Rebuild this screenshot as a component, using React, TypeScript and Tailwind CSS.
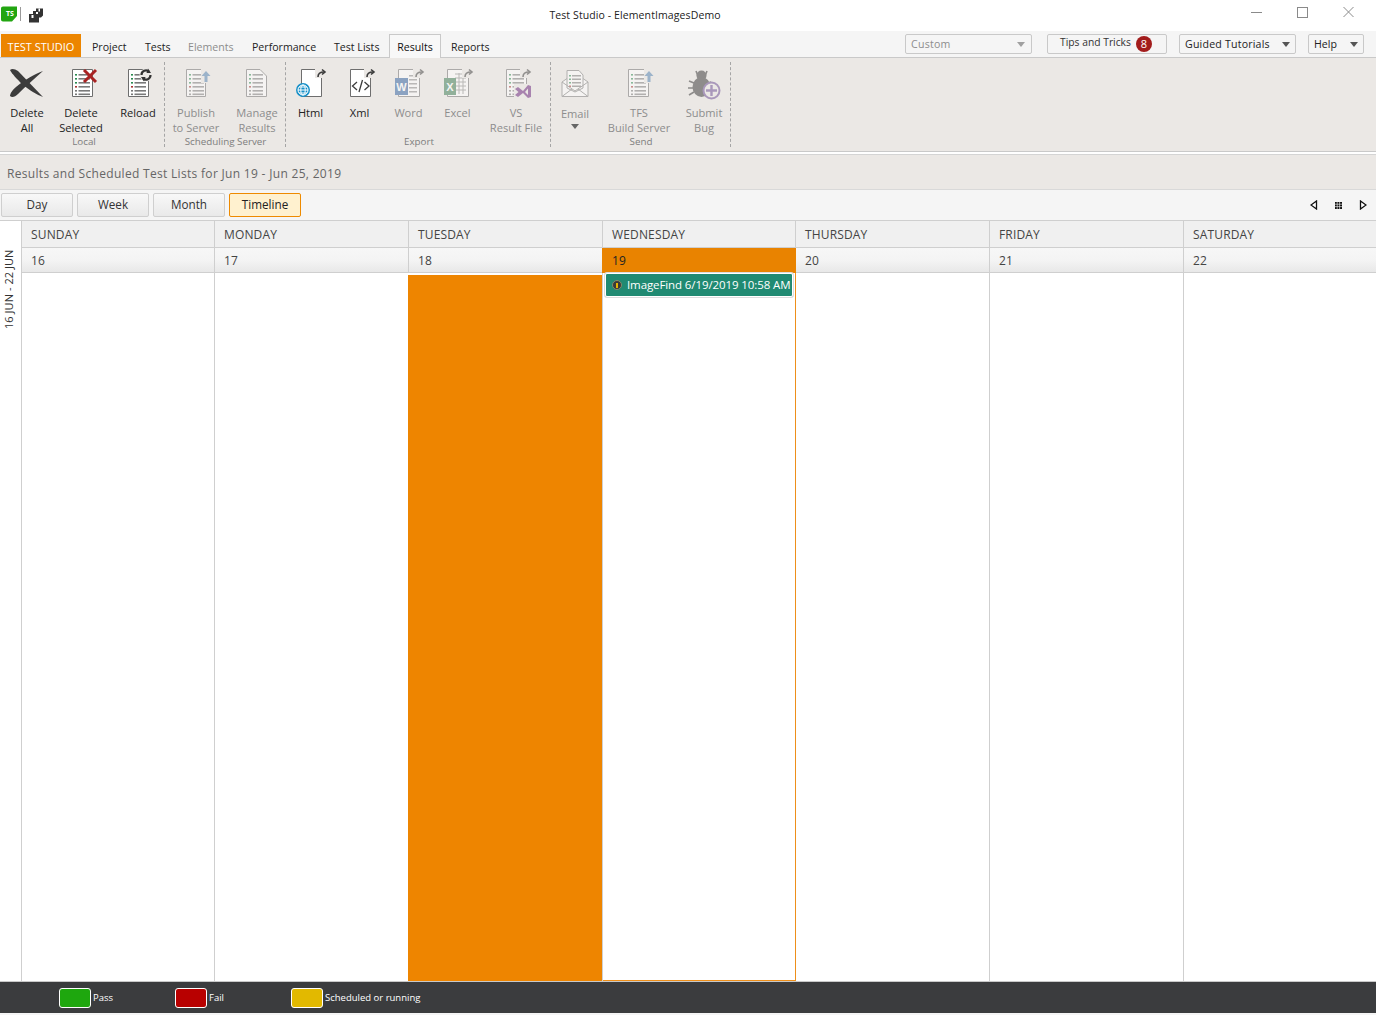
import React from "react";

const Svg = ({ children, dim }: { children: React.ReactNode; dim?: boolean }) => (
  <svg width="40" height="36" viewBox="0 0 40 36" className={dim ? "opacity-50" : ""}>
    {children}
  </svg>
);

const Doc = ({ x = 10, w = 21, fold = false, fill = "#ffffff", stroke = "#6e6e6e" }: { x?: number; w?: number; fold?: boolean; fill?: string; stroke?: string }) => (
  <path
    d={fold
      ? `M${x + 0.5} 4.5H${x + w - 7}L${x + w - 0.5} 11V31.5H${x + 0.5}Z`
      : `M${x + 0.5} 4.5H${x + w - 0.5}V31.5H${x + 0.5}Z`}
    fill={fill}
    stroke={stroke}
    strokeWidth="1"
  />
);

const Rows = ({ x = 13, w = 15, colors = true }: { x?: number; w?: number; colors?: boolean }) => (
  <g>
    {[9, 13, 17, 21, 25, 28.5].map((y, i) => (
      <g key={y}>
        <rect x={x} y={y} width="2" height="1.6" fill={!colors ? "#777" : i === 3 ? "#a33" : i < 3 ? "#2a8a50" : "#777"} />
        <rect x={x + 3.5} y={y} width={w - 3.5} height="1.6" fill="#7a7a7a" />
      </g>
    ))}
  </g>
);

const Curl = ({ x = 27 }: { x?: number }) => (
  <g fill="none" stroke="#3c3c3c" strokeWidth="1.6">
    <path d={`M${x} 12C${x} 8 ${x + 2} 7 ${x + 6} 7`} />
    <path d={`M${x + 4} 4.5L${x + 7} 7L${x + 4} 9.5`} />
  </g>
);

const UpArrow = ({ x = 30 }: { x?: number }) => (
  <path d={`M${x} 6L${x + 4.5} 11H${x + 1.5}V17H${x - 1.5}V11H${x - 4.5}Z`} fill="#4f7fb0" />
);

const icons: Record<string, React.ReactNode> = {
  deleteAll: (
    <Svg>
      <path d="M3 5C5 3 8 4 11 6L36 32C30 30 22 25 15 19C10 14 5 9 3 5Z" fill="#3c3c3c" />
      <path d="M36 6C28 9 17 15 9 22C5 25 3 29 3 31C5 33 8 32 11 29C19 21 28 13 36 6Z" fill="#3c3c3c" />
    </Svg>
  ),
  deleteSel: (
    <Svg>
      <Doc x={11} />
      <Rows x={14} />
      <path d="M23 5L35 17M35 5L23 17" stroke="#a82323" strokeWidth="3" />
    </Svg>
  ),
  reload: (
    <Svg>
      <Doc x={10} />
      <Rows x={13} />
      <circle cx="28" cy="10" r="6.5" fill="#ebe8e5" />
      <path d="M23.5 10A4.5 4.5 0 0 1 31 6.6M32.5 10A4.5 4.5 0 0 1 25 13.4" fill="none" stroke="#333" strokeWidth="2.2" />
      <path d="M30 3.5L33 8H28.5ZM26 16.5L23 12H27.5Z" fill="#333" />
    </Svg>
  ),
  publish: (
    <Svg dim>
      <Doc x={10} w={20} />
      <Rows x={13} />
      <rect x="25" y="3" width="10" height="15" fill="#ebe8e5" />
      <UpArrow x={30} />
    </Svg>
  ),
  manage: (
    <Svg dim>
      <Doc x={9} fold />
      <Rows x={12} w={14} />
    </Svg>
  ),
  html: (
    <Svg>
      <Doc x={10} />
      <rect x="24" y="2" width="11" height="11" fill="#ebe8e5" />
      <Curl x={27} />
      <circle cx="12" cy="25" r="7" fill="#1790c8" />
      <g fill="none" stroke="#fff" strokeWidth="1">
        <circle cx="12" cy="25" r="5" />
        <ellipse cx="12" cy="25" rx="2.2" ry="5" />
        <path d="M7 25H17M8 22H16M8 28H16" />
      </g>
    </Svg>
  ),
  xml: (
    <Svg>
      <Doc x={10} />
      <rect x="24" y="2" width="11" height="11" fill="#ebe8e5" />
      <Curl x={27} />
      <path d="M17 17L12.5 21L17 25M24.5 17L29 21L24.5 25M22.5 15L19 27" fill="none" stroke="#3c3c3c" strokeWidth="1.3" />
    </Svg>
  ),
  word: (
    <Svg dim>
      <Doc x={9} w={22} />
      {[10, 14, 18, 22, 26].map((y) => (
        <rect key={y} x="20" y={y} width="8" height="1.5" fill="#8a8a8a" />
      ))}
      <rect x="24" y="2" width="11" height="11" fill="#ebe8e5" />
      <Curl x={27} />
      <rect x="6" y="13" width="13" height="17" fill="#2e5f9e" />
      <text x="12.5" y="25.5" fontSize="11" fontWeight="700" textAnchor="middle" fill="#fff" fontFamily="Liberation Sans, sans-serif">W</text>
    </Svg>
  ),
  excel: (
    <Svg dim>
      <Doc x={9} w={22} />
      <g stroke="#8a8a8a" strokeWidth="1">
        {[9, 13, 17, 21, 25].map((y) => (
          <path key={y} d={`M17 ${y}H28`} />
        ))}
        <path d="M21 8V29M25 8V29" />
      </g>
      <rect x="24" y="2" width="11" height="11" fill="#ebe8e5" />
      <Curl x={27} />
      <rect x="6" y="13" width="12" height="17" fill="#3a7a52" />
      <text x="12" y="25.5" fontSize="11" fontWeight="700" textAnchor="middle" fill="#fff" fontFamily="Liberation Sans, sans-serif">X</text>
    </Svg>
  ),
  vs: (
    <Svg dim>
      <Doc x={10} />
      <Rows x={13} />
      <rect x="24" y="2" width="11" height="11" fill="#ebe8e5" />
      <Curl x={27} />
      <rect x="18" y="19" width="18" height="15" fill="#ebe8e5" />
      <path d="M19 24L22 22L27 26L32 20L35 21V32L32 33L27 28L22 32L19 30L22.5 27Z M32 23.5L29 27L32 30Z" fill="#68217a" fillRule="evenodd" />
    </Svg>
  ),
  email: (
    <Svg dim>
      <path d="M7 17L20 8L33 17V31.5H7Z" fill="#fff" stroke="#7a7a7a" />
      <path d="M12 5.5H24L28 10V23L20 27L12 23Z" fill="#fff" stroke="#7a7a7a" />
      {[10, 13.5, 17, 20.5].map((y, i) => (
        <g key={y}>
          <rect x="14" y={y} width="2" height="1.5" fill={i === 3 ? "#a33" : "#2a8a50"} />
          <rect x="17" y={y} width="9" height="1.5" fill="#7a7a7a" />
        </g>
      ))}
      <path d="M7 17L20 26L33 17M7 31.5L17 24M33 31.5L23 24" fill="none" stroke="#7a7a7a" />
    </Svg>
  ),
  tfs: (
    <Svg dim>
      <Doc x={9} w={21} />
      <Rows x={12} />
      <rect x="25" y="3" width="10" height="15" fill="#ebe8e5" />
      <UpArrow x={30} />
    </Svg>
  ),
  bug: (
    <Svg dim>
      <g stroke="#333" strokeWidth="1.6" fill="none">
        <path d="M12 6L14 11M23 6L21 11M5 16L10 18M4 23H9M5 30L10 27M27 17L24 18" />
      </g>
      <circle cx="17.5" cy="10.5" r="5" fill="#333" />
      <ellipse cx="17.5" cy="22" rx="9" ry="10" fill="#333" />
      <circle cx="27.5" cy="25.5" r="8" fill="#ebe8e5" stroke="#6a4a92" strokeWidth="2" />
      <path d="M27.5 20V31M22 25.5H33" stroke="#6a4a92" strokeWidth="2.4" />
    </Svg>
  ),
};

const Item = ({ icon, label, dim, className, arrow }: { icon: string; label: string[]; dim?: boolean; className: string; arrow?: boolean }) => (
  <div className={`flex flex-col items-center shrink-0 ${className}`}>
    <div className="h-[36px] w-[40px] mt-[7px] shrink-0">{icons[icon]}</div>
    <div className={`${arrow ? "mt-[5px]" : "mt-[4px]"} text-center text-[11.1px] leading-[15px] whitespace-nowrap ${dim ? "text-[#8d8d8d]" : "text-[#222222]"}`}>
      {label.map((l) => (
        <div key={l}>{l}</div>
      ))}
      {arrow && <div className="mx-auto mt-[3px] w-0 h-0 border-x-[4px] border-x-transparent border-t-[5px] border-t-[#666666]" />}
    </div>
  </div>
);

const Group = ({ label, children, className, labelClass = "" }: { label: string; children: React.ReactNode; className: string; labelClass?: string }) => (
  <div className={`flex flex-col h-full shrink-0 ${className}`}>
    <div className="flex flex-1">{children}</div>
    <div className={`text-center text-[9.8px] leading-[14px] text-[#7d7d7d] h-[17px] ${labelClass}`}>{label}</div>
  </div>
);

const Sep = () => <div className="w-px shrink-0 my-[4px] border-l border-dashed border-[#a5a5a5]" />;

const Caret = ({ color = "#555555" }: { color?: string }) => (
  <span className="w-0 h-0 border-x-[4px] border-x-transparent border-t-[5px]" style={{ borderTopColor: color }} />
);

const ToolBtn = ({ label, active }: { label: string; active?: boolean }) => (
  <button
    className={`w-[72px] h-[24px] rounded-[2px] border text-[11.7px] leading-none ${
      active
        ? "border-[#ee8a00] bg-[#fff1cf] text-[#222222]"
        : "border-[#cfcfcf] bg-gradient-to-b from-[#f8f8f8] to-[#e9e9e9] text-[#333333]"
    }`}
  >
    {label}
  </button>
);

const days = ["SUNDAY", "MONDAY", "TUESDAY", "WEDNESDAY", "THURSDAY", "FRIDAY", "SATURDAY"];
const dates = ["16", "17", "18", "19", "20", "21", "22"];

const Legend = ({ color, label, className }: { color: string; label: string; className: string }) => (
  <div className={`flex items-center gap-[2px] shrink-0 ${className}`}>
    <span className={`w-[32px] h-[20px] rounded-[3px] border border-white ${color}`} />
    <span className="text-[9.5px] pt-[1px] text-white whitespace-nowrap">{label}</span>
  </div>
);

export default function App() {
  return (
    <div className="w-[1376px] h-[1015px] flex flex-col overflow-hidden bg-white [font-family:'Open_Sans',sans-serif] text-[#333333]">
      {/* title bar */}
      <div className="h-[31px] flex items-start relative shrink-0">
        <svg width="46" height="24" viewBox="0 0 46 24" className="mt-[4px] shrink-0">
          <path d="M3 2.5H17V12L12 17.5H3C1.8 17.5 1 16.7 1 15.5V4.5C1 3.3 1.8 2.5 3 2.5Z" fill="#22a511" />
          <rect x="20" y="3" width="1" height="14" fill="#9a9a9a" />
          <path d="M29 10H33V7H36V10H39V18.5H29Z" fill="#333" />
          <path d="M36 4.5H43V11.5L41 13.5H38V8H36Z" fill="#333" />
          <rect x="38.5" y="4.5" width="1.5" height="3" fill="#fff" />
          <rect x="31.5" y="11" width="2" height="3" fill="#fff" />
        </svg>
        <span className="absolute left-[6px] top-[10px] text-[7px] leading-[8px] font-bold text-white">TS</span>
        <div className="flex-1 text-center text-[10.5px] leading-[31px] text-[#222222] pr-[27px] tracking-[0.1px]">
          Test Studio - ElementImagesDemo
        </div>
        <div className="flex items-start shrink-0 mr-[22px] mt-[6px] gap-[35px]">
          <svg width="11" height="12" viewBox="0 0 11 12"><path d="M0 6.5H11" stroke="#8a8a8a" /></svg>
          <svg width="11" height="12" viewBox="0 0 11 12"><rect x="0.5" y="1.5" width="10" height="10" fill="none" stroke="#8a8a8a" /></svg>
          <svg width="11" height="12" viewBox="0 0 11 12"><path d="M0.5 1L10.5 11M10.5 1L0.5 11" stroke="#8a8a8a" /></svg>
        </div>
      </div>

      {/* tab bar */}
      <div className="h-[27px] bg-[#f5f5f5] flex items-end relative shrink-0 border-b border-[#c9c9c9] text-[10.6px]">
        <div className="ml-[1px] w-[80px] h-[23px] pt-[4px] text-[11px] bg-[#ec8500] text-white flex items-center justify-center whitespace-nowrap">TEST STUDIO</div>
        <div className="h-[24px] pt-[6px] flex items-center text-[#222222] ml-[11px]"><span className="w-[53px]">Project</span><span className="w-[43px]">Tests</span><span className="w-[64px] text-[#8d8d8d]">Elements</span><span className="w-[82px]">Performance</span><span className="w-[55px] whitespace-nowrap">Test Lists</span></div>
        <div className="h-[24px] pt-[3px] w-[52px] -mb-px bg-[#f8f8f8] border border-b-0 border-[#c9c9c9] flex items-center justify-center text-[#111111]">Results</div>
        <div className="h-[24px] pt-[6px] ml-[10px] flex items-center text-[#222222]">Reports</div>
        <div className="absolute right-[12px] top-[3px] flex">
          <div className="w-[127px] h-[20px] pt-[1px] mr-[15px] rounded-[2px] border border-[#c9c9c9] flex items-center justify-between pl-[5px] pr-[6px] text-[#8d8d8d] tracking-[0.25px]">Custom<Caret color="#a0a0a0" /></div>
          <div className="w-[120px] h-[20px] mr-[12px] pr-[2px] rounded-[2px] border border-[#c9c9c9] flex items-center justify-center gap-[5px] text-[#333333] text-[10.3px]">
            <span className="-mt-[2px]">Tips and Tricks</span>
            <span className="w-[16px] h-[16px] rounded-full bg-[#a21c1c] text-white flex items-center justify-center text-[11px]">8</span>
          </div>
          <div className="w-[117px] h-[20px] pt-[1px] mr-[12px] rounded-[2px] border border-[#c9c9c9] flex items-center justify-between px-[5px] text-[#222222] tracking-[0.2px] whitespace-nowrap">Guided Tutorials<Caret /></div>
          <div className="w-[56px] h-[20px] pt-[1px] rounded-[2px] border border-[#c9c9c9] flex items-center justify-between px-[5px] text-[#222222]">Help<Caret /></div>
        </div>
      </div>

      {/* ribbon */}
      <div className="h-[94px] bg-[#ebe8e5] flex shrink-0 border-b border-[#c9c9c9] pt-0">
        <Group label="Local" className="w-[164px]" labelClass="pl-[4px]">
          <Item icon="deleteAll" label={["Delete", "All"]} className="w-[54px]" />
          <Item icon="deleteSel" label={["Delete", "Selected"]} className="w-[54px]" />
          <Item icon="reload" label={["Reload"]} className="w-[52px] ml-[4px]" />
        </Group>
        <Sep />
        <Group label="Scheduling Server" className="w-[120px]" labelClass="pl-[1px]">
          <Item dim icon="publish" label={["Publish", "to Server"]} className="w-[62px]" />
          <Item dim icon="manage" label={["Manage", "Results"]} className="w-[56px] ml-[2px]" />
        </Group>
        <Sep />
        <Group label="Export" className="w-[264px]" labelClass="pl-[2px]">
          <Item icon="html" label={["Html"]} className="w-[49px]" />
          <Item icon="xml" label={["Xml"]} className="w-[49px]" />
          <Item dim icon="word" label={["Word"]} className="w-[49px]" />
          <Item dim icon="excel" label={["Excel"]} className="w-[49px]" />
          <Item dim icon="vs" label={["VS", "Result File"]} className="w-[68px]" />
        </Group>
        <Sep />
        <Group label="Send" className="w-[179px]" labelClass="pl-[1px]">
          <Item dim arrow icon="email" label={["Email"]} className="w-[48px]" />
          <Item dim icon="tfs" label={["TFS", "Build Server"]} className="w-[80px]" />
          <Item dim icon="bug" label={["Submit", "Bug"]} className="w-[50px]" />
        </Group>
        <Sep />
      </div>

      <div className="h-[3px] shrink-0 bg-white border-b border-[#d4d4d4]" />

      {/* heading */}
      <div className="h-[35px] pt-[3px] bg-[#ebe8e5] shrink-0 border-b border-[#d9d9d9] flex items-center pl-[7px] text-[12px] tracking-[0.31px] text-[#666666]">
        Results and Scheduled Test Lists for Jun 19 - Jun 25, 2019
      </div>

      {/* toolbar */}
      <div className="h-[31px] bg-[#f5f5f5] shrink-0 border-b border-[#cfcfcf] flex items-center pl-[1px] gap-[4px]">
        <ToolBtn label="Day" />
        <ToolBtn label="Week" />
        <ToolBtn label="Month" />
        <ToolBtn active label="Timeline" />
        <div className="ml-auto mr-[9px] flex items-center gap-[17px]">
          <svg width="8" height="10" viewBox="0 0 8 10"><path d="M6.5 1V9L1 5Z" fill="#fff" stroke="#111" strokeWidth="1.3" /></svg>
          <svg width="7" height="7" viewBox="0 0 7 7"><path d="M0 0H7V7H0Z" fill="#111" /><path d="M2.2 0V7M4.6 0V7M0 2.2H7M0 4.6H7" stroke="#fff" strokeWidth="0.6" /></svg>
          <svg width="8" height="10" viewBox="0 0 8 10"><path d="M1.5 1V9L7 5Z" fill="#fff" stroke="#111" strokeWidth="1.3" /></svg>
        </div>
      </div>

      {/* calendar */}
      <div className="flex-1 min-h-0 grid grid-cols-[22px_193px_194px_194px_193px_194px_194px_1fr] grid-rows-[27px_25px_1fr] text-[12px] tracking-[0.15px] text-[#444444]">
        <div className="bg-white border-r border-[#cfcfcf]" />
        {days.map((d, i) => (
          <div key={d} className={`bg-[#f0f0f0] border-b border-[#cfcfcf] flex items-center pl-[9px] pt-[1px] ${i < 6 ? "border-r" : ""}`}>{d}</div>
        ))}
        <div className="row-span-2 bg-white border-r border-[#cfcfcf] relative">
          <span className="absolute left-[2px] top-[1px] h-[80px] text-[11px] tracking-[0.05px] leading-[14px] whitespace-nowrap text-[#333333] [writing-mode:vertical-rl] rotate-180 text-left">16 JUN - 22 JUN</span>
        </div>
        {dates.map((d, i) =>
          d === "19" ? (
            <div key={d} className="bg-[#e98300] -ml-px flex items-center pl-[10px] pt-[1px] text-[#222222]">{d}</div>
          ) : (
            <div key={d} className={`bg-gradient-to-b from-[#f7f7f7] via-[#f4f4f4] to-[#e8e8e8] border-b border-[#cfcfcf] flex items-center pl-[9px] pt-[1px] ${i < 6 ? "border-r" : ""}`}>{d}</div>
          )
        )}
        <div className="bg-white border-r border-[#cfcfcf]" />
        <div className="bg-white border-r border-[#cfcfcf]" />
        <div className="bg-white pt-[2px] -ml-px border-r border-[#cfcfcf]"><div className="h-full bg-[#ee8500]" /></div>
        <div className="bg-white border-r border-b border-[#ee8f1a] relative pl-[2px] pr-[2px]">
          <div className="h-[24px] rounded-[2px] bg-[#208a72] border border-white shadow-[0_0_0_1px_#dcdcdc] flex items-center pl-[6px] gap-[5px] text-white text-[11.5px] whitespace-nowrap tracking-[-0.1px]">
            <span className="w-[10px] h-[10px] rounded-full bg-[#3a3a3a] border border-[#8a8a6a] flex items-center justify-center shrink-0">
              <span className="w-[2px] h-[5px] bg-[#e6b400]" />
            </span>
            ImageFind 6/19/2019 10:58 AM
          </div>
        </div>
        <div className="bg-white border-r border-[#cfcfcf]" />
        <div className="bg-white border-r border-[#cfcfcf]" />
        <div className="bg-white" />
      </div>

      {/* footer */}
      <div className="h-[32px] shrink-0 bg-[#3b3c3e] border-t border-[#c9c9c9] flex items-center pl-[59px]">
        <Legend color="bg-[#1ea70e]" label="Pass" className="w-[116px]" />
        <Legend color="bg-[#b80000]" label="Fail" className="w-[116px]" />
        <Legend color="bg-[#e2b900]" label="Scheduled or running" className="w-[200px]" />
      </div>
      <div className="h-[2px] shrink-0 bg-[#f5f5f5]" />
    </div>
  );
}
